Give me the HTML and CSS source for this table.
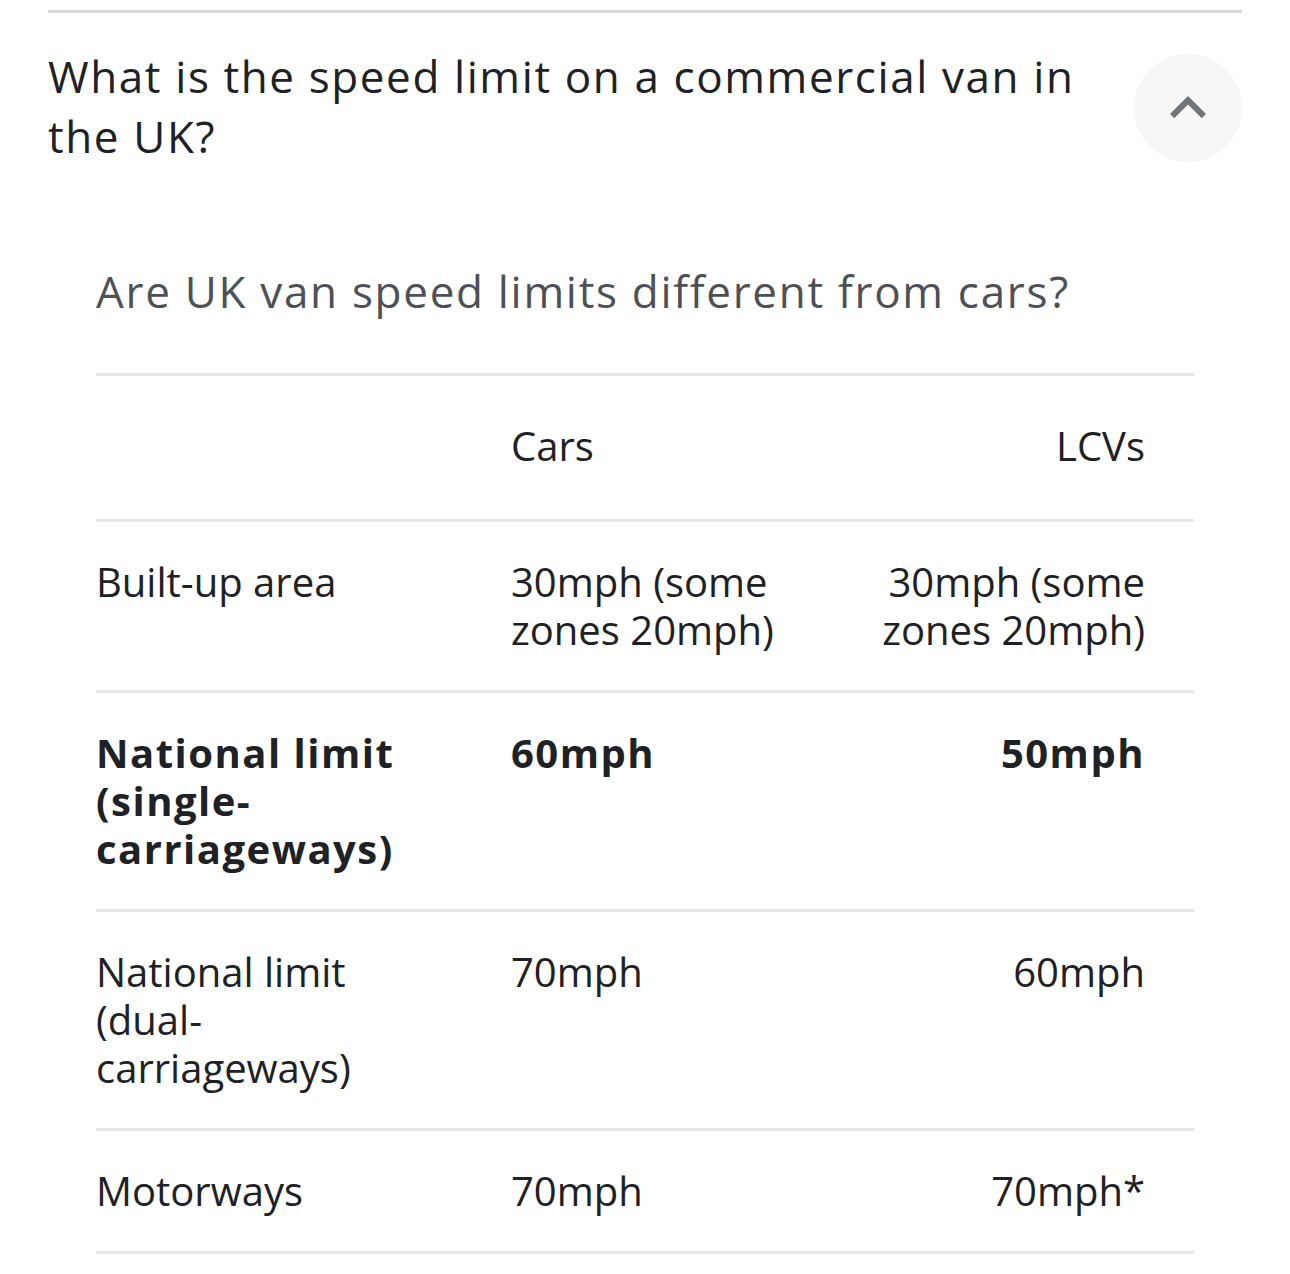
FILE: index.html
```html
<!DOCTYPE html>
<html lang="en">
<head>
<meta charset="utf-8">
<title>UK van speed limits</title>
<link rel="stylesheet" href="styles.css">
</head>
<body>
<div class="faq">
  <div class="faq-head">
    <h2 class="question">What is the speed limit on a commercial van in the UK?</h2>
    <button class="toggle" aria-label="Collapse">
      <svg width="72" height="72" viewBox="0 0 24 24"><path d="M7.41 15.41L12 10.83l4.59 4.58L18 14l-6-6-6 6z" fill="#70757a"/></svg>
    </button>
  </div>
  <div class="answer">
    <h3 class="subhead">Are UK van speed limits different from cars?</h3>
    <div class="table">
      <div class="row head">
        <div class="cell c1"></div>
        <div class="cell c2">Cars</div>
        <div class="cell c3">LCVs</div>
      </div>
      <div class="row">
        <div class="cell c1">Built-up area</div>
        <div class="cell c2">30mph (some zones 20mph)</div>
        <div class="cell c3">30mph (some zones 20mph)</div>
      </div>
      <div class="row bold">
        <div class="cell c1">National limit (single-carriageways)</div>
        <div class="cell c2">60mph</div>
        <div class="cell c3">50mph</div>
      </div>
      <div class="row">
        <div class="cell c1">National limit (dual-carriageways)</div>
        <div class="cell c2">70mph</div>
        <div class="cell c3">60mph</div>
      </div>
      <div class="row">
        <div class="cell c1">Motorways</div>
        <div class="cell c2">70mph</div>
        <div class="cell c3">70mph*</div>
      </div>
    </div>
  </div>
</div>
</body>
</html>
```
FILE: styles.css
```css
html, body {
  margin: 0;
  padding: 0;
  background: #ffffff;
}
body {
  font-family: "Open Sans", "Liberation Sans", sans-serif;
  color: #202124;
}
.faq {
  margin: 10px 48px 0 48px;
  border-top: 3px solid #d6d6d6;
}
.faq-head {
  display: flex;
  align-items: center;
  gap: 50px;
  padding-top: 33px;
}
.question {
  flex: 1;
  margin: 0;
  font-size: 44px;
  line-height: 60px;
  font-weight: 500;
  letter-spacing: 1.6px;
  color: #202124;
}
.toggle {
  flex: none;
  width: 108px;
  height: 108px;
  margin-top: 4px;
  border-radius: 50%;
  border: none;
  background: #f6f6f6;
  display: flex;
  align-items: center;
  justify-content: center;
  padding: 0;
}
.answer {
  padding: 0 48px;
}
.subhead {
  margin: 95px 0 0 0;
  font-size: 44px;
  line-height: 60px;
  font-weight: 500;
  letter-spacing: 1.7px;
  color: #4d5156;
}
.table {
  margin-top: 52px;
  border-top: 3px solid #e6e6e6;
}
.row {
  display: grid;
  grid-template-columns: 366px 366px 366px;
  border-bottom: 3px solid #e6e6e6;
  padding: 36px 0;
  font-size: 40px;
  line-height: 48px;
}
.row.head {
  padding: 46px 0 49px 0;
}
.row.bold {
  font-weight: 700;
  letter-spacing: 1.5px;
}
.c1 {
  padding-right: 49px;
}
.c2 {
  padding-left: 49px;
}
.c3 {
  padding-left: 20px;
  padding-right: 49px;
  text-align: right;
}
```
